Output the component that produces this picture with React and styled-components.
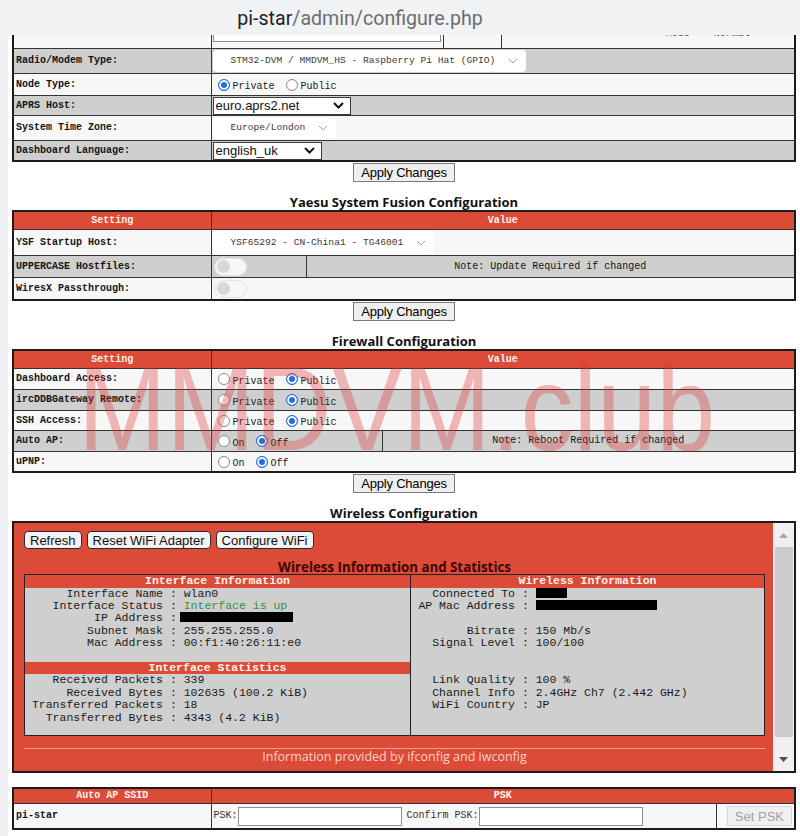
import { Fragment } from 'react';
import styled, { createGlobalStyle } from 'styled-components';

const RED = '#dc4a38';
const GRAY = '#cfcfcf';
const LIGHT = '#f7f7f7';
const MONO = '"Liberation Mono", "Courier New", monospace';
const SANS = '"Liberation Sans", Arial, sans-serif';
const UI = '"Open Sans", "Noto Sans", sans-serif';

const GlobalStyle = createGlobalStyle`
  html, body { margin: 0; padding: 0; background: #fff; }
  body { font-family: ${SANS}; color: #111; }
`;

const leftInfo = [
  { k: 'Interface Name', v: 'wlan0' },
  { k: 'Interface Status', v: 'Interface is up', green: true },
  { k: 'IP Address', redact: 113, shift: -4 },
  { k: 'Subnet Mask', v: '255.255.255.0' },
  { k: 'Mac Address', v: '00:f1:40:26:11:e0' },
  null,
];

const leftStats = [
  { k: 'Received Packets', v: '339' },
  { k: 'Received Bytes', v: '102635 (100.2 KiB)' },
  { k: 'Transferred Packets', v: '18' },
  { k: 'Transferred Bytes', v: '4343 (4.2 KiB)' },
];

const rightInfo = [
  { k: 'Connected To', redact: 31 },
  { k: 'AP Mac Address', redact: 121 },
  null,
  { k: 'Bitrate', v: '150 Mb/s' },
  { k: 'Signal Level', v: '100/100' },
  null,
  null,
  { k: 'Link Quality', v: '100 %' },
  { k: 'Channel Info', v: '2.4GHz Ch7 (2.442 GHz)' },
  { k: 'WiFi Country', v: 'JP' },
];

function Chevron({ bold }) {
  if (bold) {
    return (
      <svg width="11" height="7" viewBox="0 0 11 7">
        <path d="M1 1l4.5 4.5L10 1" fill="none" stroke="#111" strokeWidth="2" />
      </svg>
    );
  }
  return (
    <svg width="10" height="6" viewBox="0 0 10 6">
      <path d="M1 1l4 4 4-4" fill="none" stroke="#a0a0a0" strokeWidth="1" />
    </svg>
  );
}

function Radio({ on, children }) {
  return (
    <RadioItem>
      <RadioDot $on={on} />
      <RadioText>{children}</RadioText>
    </RadioItem>
  );
}

function InfoLines({ rows, labelW }) {
  return (
    <Lines $labelW={labelW}>
      {rows.map((r, i) =>
        r ? (
          <Fragment key={i}>
            <Key>{r.k}</Key>
            <Val>
              {' : '}
              {r.redact ? (
                <Redact $w={r.redact} $shift={r.shift || 0} />
              ) : (
                <Tone $green={r.green}>{r.v}</Tone>
              )}
            </Val>
          </Fragment>
        ) : (
          <Blank key={i} />
        )
      )}
    </Lines>
  );
}

export default function App() {
  return (
    <Page>
      <GlobalStyle />
      <UrlBar>
        <Host>pi-star</Host>/admin/configure.php
      </UrlBar>
      <Shell>
        <SideStrip />
        <Content>
          <ClipTop>
            <Table $lift>
              <colgroup>
                <Col $w={198} />
                <Col $w={232} />
                <Col $w={58} />
                <col />
              </colgroup>
              <tbody>
                <tr>
                  <Label $h={26}></Label>
                  <Cell>
                    <TextBox />
                  </Cell>
                  <Cell></Cell>
                  <Cell $center>
                    <CutText>Mode&nbsp;&nbsp;&nbsp;&nbsp;Normal</CutText>
                  </Cell>
                </tr>
                <tr>
                  <Label $h={24}>Radio/Modem Type:</Label>
                  <Cell colSpan={3}>
                    <FluentSelect $w={313} $h={22}>
                      STM32-DVM / MMDVM_HS - Raspberry Pi Hat (GPIO)
                      <Chevron />
                    </FluentSelect>
                  </Cell>
                </tr>
                <tr>
                  <Label $h={21}>Node Type:</Label>
                  <Cell colSpan={3}>
                    <RadioGroup>
                      <Radio on>Private</Radio>
                      <Radio>Public</Radio>
                    </RadioGroup>
                  </Cell>
                </tr>
                <tr>
                  <Label $h={19}>APRS Host:</Label>
                  <Cell colSpan={3}>
                    <NativeSelect $w={138}>
                      euro.aprs2.net
                      <Chevron bold />
                    </NativeSelect>
                  </Cell>
                </tr>
                <tr>
                  <Label $h={24}>System Time Zone:</Label>
                  <Cell colSpan={3}>
                    <FluentSelect $w={123} $h={21}>
                      Europe/London
                      <Chevron />
                    </FluentSelect>
                  </Cell>
                </tr>
                <tr>
                  <Label $h={19}>Dashboard Language:</Label>
                  <Cell colSpan={3}>
                    <NativeSelect $w={109}>
                      english_uk
                      <Chevron bold />
                    </NativeSelect>
                  </Cell>
                </tr>
              </tbody>
            </Table>
          </ClipTop>
          <ApplyRow>
            <Button>Apply Changes</Button>
          </ApplyRow>

          <SectionTitle>Yaesu System Fusion Configuration</SectionTitle>
          <Table>
            <colgroup>
              <Col $w={198} />
              <Col $w={95} />
              <col />
            </colgroup>
            <thead>
              <tr>
                <Th $h={17}>Setting</Th>
                <Th colSpan={2}>Value</Th>
              </tr>
            </thead>
            <tbody>
              <tr>
                <Label $h={25}>YSF Startup Host:</Label>
                <Cell colSpan={2}>
                  <FluentSelect $w={221} $h={23}>
                    YSF65292 - CN-China1 - TG46001
                    <Chevron />
                  </FluentSelect>
                </Cell>
              </tr>
              <tr>
                <Label $h={21}>UPPERCASE Hostfiles:</Label>
                <Cell>
                  <Toggle />
                </Cell>
                <Cell $center>Note: Update Required if changed</Cell>
              </tr>
              <tr>
                <Label $h={21}>WiresX Passthrough:</Label>
                <Cell colSpan={2}>
                  <Toggle />
                </Cell>
              </tr>
            </tbody>
          </Table>
          <ApplyRow>
            <Button>Apply Changes</Button>
          </ApplyRow>

          <SectionTitle>Firewall Configuration</SectionTitle>
          <Table>
            <colgroup>
              <Col $w={198} />
              <Col $w={171} />
              <col />
            </colgroup>
            <thead>
              <tr>
                <Th $h={17}>Setting</Th>
                <Th colSpan={2}>Value</Th>
              </tr>
            </thead>
            <tbody>
              <tr>
                <Label $h={20}>Dashboard Access:</Label>
                <Cell colSpan={2}>
                  <RadioGroup>
                    <Radio>Private</Radio>
                    <Radio on>Public</Radio>
                  </RadioGroup>
                </Cell>
              </tr>
              <tr>
                <Label $h={20}>ircDDBGateway Remote:</Label>
                <Cell colSpan={2}>
                  <RadioGroup>
                    <Radio>Private</Radio>
                    <Radio on>Public</Radio>
                  </RadioGroup>
                </Cell>
              </tr>
              <tr>
                <Label $h={19}>SSH Access:</Label>
                <Cell colSpan={2}>
                  <RadioGroup>
                    <Radio>Private</Radio>
                    <Radio on>Public</Radio>
                  </RadioGroup>
                </Cell>
              </tr>
              <tr>
                <Label $h={20}>Auto AP:</Label>
                <Cell>
                  <RadioGroup>
                    <Radio>On</Radio>
                    <Radio on>Off</Radio>
                  </RadioGroup>
                </Cell>
                <Cell $center>Note: Reboot Required if changed</Cell>
              </tr>
              <tr>
                <Label $h={19}>uPNP:</Label>
                <Cell colSpan={2}>
                  <RadioGroup>
                    <Radio>On</Radio>
                    <Radio on>Off</Radio>
                  </RadioGroup>
                </Cell>
              </tr>
            </tbody>
          </Table>
          <ApplyRow>
            <Button>Apply Changes</Button>
          </ApplyRow>

          <SectionTitle>Wireless Configuration</SectionTitle>
          <WifiFrame>
            <WifiBody>
              <WifiButtons>
                <PanelButton>Refresh</PanelButton>
                <PanelButton>Reset WiFi Adapter</PanelButton>
                <PanelButton>Configure WiFi</PanelButton>
              </WifiButtons>
              <WifiTitle>Wireless Information and Statistics</WifiTitle>
              <InfoGrid>
                <InfoCol>
                  <InfoHead>Interface Information</InfoHead>
                  <InfoLines rows={leftInfo} labelW={138} />
                  <InfoHead>Interface Statistics</InfoHead>
                  <InfoLines rows={leftStats} labelW={138} />
                </InfoCol>
                <InfoCol $divided>
                  <InfoHead>Wireless Information</InfoHead>
                  <InfoLines rows={rightInfo} labelW={104} />
                </InfoCol>
              </InfoGrid>
              <Rule />
              <WifiFoot>Information provided by ifconfig and iwconfig</WifiFoot>
            </WifiBody>
            <ScrollTrack>
              <ScrollArrow $dim>
                <svg width="9" height="5" viewBox="0 0 9 5"><path d="M0 5L4.5 0L9 5z" fill="#a8a8a8" /></svg>
              </ScrollArrow>
              <ScrollThumb />
              <ScrollArrow>
                <svg width="9" height="5" viewBox="0 0 9 5"><path d="M0 0L4.5 5L9 0z" fill="#505050" /></svg>
              </ScrollArrow>
            </ScrollTrack>
          </WifiFrame>

          <Table $gapTop>
            <colgroup>
              <Col $w={198} />
              <Col $w={505} />
              <col />
            </colgroup>
            <thead>
              <tr>
                <Th $h={14}>Auto AP SSID</Th>
                <Th colSpan={2}>PSK</Th>
              </tr>
            </thead>
            <tbody>
              <tr>
                <Label $h={24}>pi-star</Label>
                <Cell>
                  <PskRow>
                    <PskText>PSK:</PskText>
                    <PskInput />
                    <PskText $gap>Confirm PSK:</PskText>
                    <PskInput />
                  </PskRow>
                </Cell>
                <Cell $right>
                  <SetButton disabled>Set PSK</SetButton>
                </Cell>
              </tr>
            </tbody>
          </Table>
        </Content>
      </Shell>
      <Watermark>MMDVM.club</Watermark>
    </Page>
  );
}

const Page = styled.div`
  position: relative;
  width: 800px;
  height: 836px;
  overflow: hidden;
  background: #fff;
`;

const UrlBar = styled.div`
  height: 35px;
  background: #f1f2f3;
  display: flex;
  align-items: center;
  justify-content: center;
  padding-right: 80px;
  padding-top: 2px;
  box-sizing: border-box;
  font-family: Roboto, "Noto Sans", sans-serif;
  font-size: 19.6px;
  color: #6a6d71;
`;

const Host = styled.span`
  color: #202124;
`;

const Shell = styled.div`
  display: flex;
  height: 801px;
`;

const SideStrip = styled.div`
  width: 8px;
  flex: none;
  background: #eef0f3;
`;

const Content = styled.div`
  flex: 1;
  padding: 0 4px;
  min-width: 0;
`;

const ClipTop = styled.div`
  overflow: hidden;
`;

const Table = styled.table`
  width: 100%;
  border-collapse: collapse;
  table-layout: fixed;
  border: 2px solid #1c1c1c;
  font-family: ${MONO};
  font-size: 10px;
  line-height: 12px;
  color: #151515;
  margin-top: ${(p) => (p.$lift ? '-15px' : p.$gapTop ? '14px' : '0')};

  tbody tr:nth-child(odd) {
    background: ${LIGHT};
  }
  tbody tr:nth-child(even) {
    background: ${GRAY};
  }
`;

const Col = styled.col`
  width: ${(p) => p.$w}px;
`;

const Th = styled.th`
  background: ${RED};
  color: #fff4ec;
  font-weight: bold;
  font-size: 10px;
  height: ${(p) => (p.$h ? `${p.$h}px` : 'auto')};
  padding: 0;
  border: 1px solid #333;
  text-align: center;
`;

const Label = styled.td`
  height: ${(p) => p.$h}px;
  padding: 0 2px;
  border: 1px solid #333;
  font-weight: bold;
  white-space: nowrap;
`;

const Cell = styled.td`
  padding: 0 1px;
  border: 1px solid #333;
  text-align: ${(p) => (p.$center ? 'center' : p.$right ? 'right' : 'left')};
  white-space: nowrap;
`;

const TextBox = styled.div`
  width: 228px;
  height: 22px;
  background: #fff;
  border: 1px solid #8d8d8d;
  box-sizing: border-box;
  margin-top: -8px;
`;

const CutText = styled.div`
  margin-top: -3px;
  padding-left: 120px;
  color: #444;
`;

const FluentSelect = styled.div`
  display: flex;
  align-items: center;
  justify-content: space-between;
  width: ${(p) => p.$w}px;
  height: ${(p) => p.$h}px;
  box-sizing: border-box;
  padding: 0 8px 0 18px;
  background: #fff;
  border-radius: 4px;
  font-family: ${MONO};
  font-size: 9.6px;
  color: #3a3a3a;
`;

const NativeSelect = styled.div`
  display: flex;
  align-items: center;
  justify-content: space-between;
  width: ${(p) => p.$w}px;
  height: 18px;
  box-sizing: border-box;
  padding: 0 6px 0 2px;
  background: #fff;
  border: 1px solid #3c3c3c;
  font-family: ${SANS};
  font-size: 13px;
  color: #111;
`;

const RadioGroup = styled.div`
  display: flex;
  align-items: center;
  gap: 11px;
  padding-left: 5px;
`;

const RadioItem = styled.span`
  display: inline-flex;
  align-items: center;
  gap: 3px;
`;

const RadioDot = styled.span`
  width: 12px;
  height: 12px;
  border-radius: 50%;
  box-sizing: border-box;
  border: 1px solid ${(p) => (p.$on ? '#1f6fe0' : '#8c8c8c')};
  background: ${(p) => (p.$on ? '#1f6fe0' : '#fff')};
  box-shadow: ${(p) => (p.$on ? 'inset 0 0 0 2px #fff' : 'none')};
`;

const RadioText = styled.span`
  padding-top: 5px;
  font-size: 10px;
  color: #222;
`;

const Toggle = styled.span`
  display: flex;
  align-items: center;
  width: 33px;
  height: 18px;
  margin-left: 1px;
  padding: 0 2px;
  box-sizing: border-box;
  border-radius: 9px;
  background: #f6f6f6;
  border: 1px solid #e4e4e4;

  &::before {
    content: '';
    width: 13px;
    height: 13px;
    border-radius: 50%;
    background: #d8d8d8;
  }
`;

const ApplyRow = styled.div`
  display: flex;
  justify-content: center;
  padding-top: 1px;
`;

const Button = styled.button`
  font-family: ${SANS};
  font-size: 13px;
  letter-spacing: -0.2px;
  height: 19px;
  padding: 0 7px;
  border: 1px solid #7a7a7a;
  border-radius: 0;
  background: #efefef;
  color: #000;
`;

const SectionTitle = styled.div`
  margin-top: 13px;
  text-align: center;
  font-family: ${UI};
  font-weight: 700;
  font-size: 13px;
  line-height: 15px;
  color: #111;
`;

const WifiFrame = styled.div`
  display: flex;
  height: 252px;
  box-sizing: border-box;
  border: 2px solid #1c1c1c;
`;

const WifiBody = styled.div`
  flex: 1;
  display: flex;
  flex-direction: column;
  padding: 8px 8px 0 10px;
  background: ${RED};
`;

const WifiButtons = styled.div`
  display: flex;
  gap: 5px;
`;

const PanelButton = styled.button`
  height: 18px;
  padding: 0 5px;
  font-family: ${SANS};
  font-size: 13px;
  border: 1px solid #2a2a2a;
  border-radius: 4px;
  background: #f3f3f3;
  color: #111;
`;

const WifiTitle = styled.div`
  margin-top: 11px;
  text-align: center;
  font-family: ${UI};
  font-weight: 700;
  font-size: 13.3px;
  line-height: 14px;
  color: #3a0800;
`;

const InfoGrid = styled.div`
  display: grid;
  grid-template-columns: 385px 1fr;
  height: 162px;
  box-sizing: border-box;
  border: 1px solid #222;
  background: ${GRAY};
  font-family: ${MONO};
  font-size: 11.5px;
  color: #1a1a1a;
`;

const InfoCol = styled.div`
  border-left: ${(p) => (p.$divided ? '1px solid #222' : 'none')};
`;

const InfoHead = styled.div`
  height: 12.5px;
  line-height: 12.5px;
  background: ${RED};
  color: #fff4ec;
  font-weight: bold;
  text-align: center;
`;

const Lines = styled.div`
  display: grid;
  grid-template-columns: ${(p) => p.$labelW}px 1fr;
  line-height: 12.4px;
`;

const Key = styled.span`
  text-align: right;
  white-space: pre;
`;

const Val = styled.span`
  white-space: pre;
`;

const Tone = styled.span`
  color: ${(p) => (p.$green ? '#2f9440' : 'inherit')};
`;

const Blank = styled.div`
  grid-column: 1 / -1;
  height: 12.4px;
`;

const Redact = styled.span`
  display: inline-block;
  vertical-align: -1px;
  width: ${(p) => p.$w}px;
  height: 10px;
  margin-left: ${(p) => p.$shift}px;
  background: #000;
`;

const Rule = styled.div`
  margin-top: 12px;
  height: 1px;
  background: #f2a08e;
`;

const WifiFoot = styled.div`
  text-align: center;
  font-family: ${UI};
  font-size: 12.5px;
  line-height: 15px;
  color: #f8d3c8;
`;

const ScrollTrack = styled.div`
  width: 21px;
  flex: none;
  display: flex;
  flex-direction: column;
  align-items: center;
  background: #f0f0f0;
`;

const ScrollArrow = styled.div`
  height: 24px;
  display: flex;
  align-items: center;
  justify-content: center;
  margin-top: ${(p) => (p.$dim ? '0' : 'auto')};
`;

const ScrollThumb = styled.div`
  width: 18px;
  height: 190px;
  background: #cbcbcb;
`;

const PskRow = styled.div`
  display: flex;
  align-items: center;
`;

const PskText = styled.span`
  margin-left: ${(p) => (p.$gap ? '5px' : '1px')};
  color: #333;
`;

const PskInput = styled.span`
  width: 164px;
  height: 19px;
  box-sizing: border-box;
  border: 1px solid #909090;
  background: #fff;
`;

const SetButton = styled.button`
  height: 20px;
  margin-right: 1px;
  padding: 0 7px;
  font-family: ${SANS};
  font-size: 13px;
  border: 1px solid #d6d6d6;
  border-radius: 0;
  background: #f0f0f0;
  color: #a3a3a3;
`;

const Watermark = styled.div`
  position: absolute;
  left: 78px;
  top: 348px;
  font-family: ${SANS};
  font-size: 120px;
  line-height: 1;
  white-space: nowrap;
  color: rgba(225, 50, 50, 0.33);
  transform: scaleX(0.885);
  transform-origin: left top;
  pointer-events: none;
`;
